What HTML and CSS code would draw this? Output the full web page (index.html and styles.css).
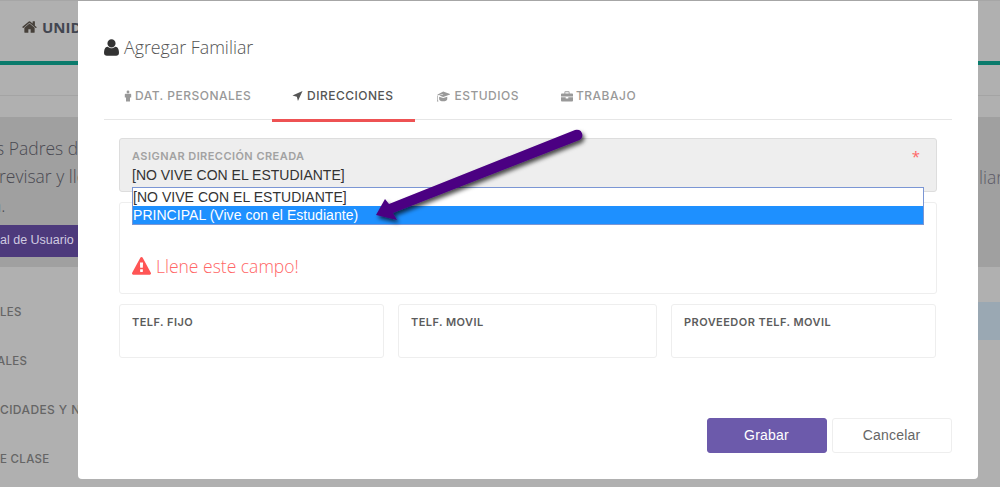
FILE: index.html
```html
<!DOCTYPE html>
<html lang="es">
<head>
<meta charset="utf-8">
<title>Agregar Familiar</title>
<link rel="stylesheet" href="styles.css">
</head>
<body>
<div class="page">
  <header class="top">
    <svg class="home" viewBox="0 0 1664 1792" aria-hidden="true"><path d="M1408 992v480q0 26-19 45t-45 19H960v-384H704v384H320q-26 0-45-19t-19-45V992q0-1 .5-3t.5-3l575-474 575 474q1 2 1 6zm223-69-62 74q-8 9-21 11h-3q-13 0-21-7L832 424 140 1001q-12 8-24 7-13-2-21-11l-62-74q-8-10-7-23.500t11-21.500L756 280q32-26 76-26t76 26l272 227V290q0-14 9-23t23-9h192q14 0 23 9t9 23v454l219 182q10 8 11 21.500t-7 23.500z"/></svg>
    <span class="brand">UNIDAD EDUCATIVA</span>
  </header>
  <div class="crumbs"></div>
  <section class="notice">
    <p class="notice-line">Estimados Padres de Familia, se les solicita</p>
    <p class="notice-line shift">revisar y llenar la información del familiar</p>
    <p class="notice-line tail">n.</p>
    <div class="manual">al de Usuario</div>
  </section>
  <ul class="menu">
    <li class="menu-row">LES</li>
    <li class="menu-row">ALES</li>
    <li class="menu-row">CIDADES Y NECESIDADES</li>
    <li class="menu-row">E CLASE</li>
  </ul>
  <div class="side-note">liar</div>
  <div class="side-band"></div>
</div>

<div class="modal">
  <h2 class="title">
    <svg class="title-icon" viewBox="0 0 1408 1792" aria-hidden="true"><path d="M1408 1405q0 120-73 189.500t-194 69.500H267q-121 0-194-69.500T0 1405q0-53 3.500-103.500t14-109T44 1084t43-97.500 62-81 85.500-53.500T346 832q9 0 42 21.500t74.500 48 108 48T704 971t133.500-21.500 108-48 74.500-48 42-21.500q61 0 111.500 20t85.500 53.500 62 81 43 97.500 26.500 108.500 14 109 3.500 103.500zM1088 512q0 159-112.500 271.500T704 896 432.500 783.500 320 512t112.500-271.500T704 128t271.500 112.500T1088 512z"/></svg>
    Agregar Familiar
  </h2>
  <nav class="tabs">
    <a class="tab t1">
      <svg class="tab-icon" viewBox="0 0 10 14" aria-hidden="true"><circle cx="5" cy="2" r="1.800"/><path d="M2 4.200h6q1 0 1 1v3.800H7.500V14h-5V9H1V5.200q0-1 1-1z"/></svg>
      DAT. PERSONALES
    </a>
    <a class="tab t2 active">
      <svg class="tab-icon" viewBox="0 0 12 12" aria-hidden="true"><path d="M11.500 .5 6.500 11.500 5.300 6.700 .5 5.500z"/></svg>
      DIRECCIONES
    </a>
    <a class="tab t3">
      <svg class="tab-icon wide" viewBox="0 0 16 12" aria-hidden="true"><path d="M8 .5 16 3.500 8 6.500 3.500 4.900 8 3.700 7.800 3.300 2.400 4.500 1.400 4.100zM3.500 6.200 8 7.800l4.500-1.600V9c0 1.200-2 2.300-4.500 2.300S3.500 10.200 3.500 9zM1.500 4.800h.7v5l.5 1.700H1l.5-1.700z"/></svg>
      ESTUDIOS
    </a>
    <a class="tab t4">
      <svg class="tab-icon wide" viewBox="0 0 14 12" aria-hidden="true"><path d="M5 0h4q1 0 1 1v1.500h3q1 0 1 1V6H0V3.500q0-1 1-1h3V1q0-1 1-1zm0 1.100v1.400h4V1.100zM0 7h5.500v1.300h3V7H14v3.800q0 1-1 1H1q-1 0-1-1z"/></svg>
      TRABAJO
    </a>
  </nav>

  <div class="field locked">
    <div class="field-head">
      <span class="label muted">ASIGNAR DIRECCIÓN CREADA</span>
      <span class="star">*</span>
    </div>
    <div class="value">[NO VIVE CON EL ESTUDIANTE]</div>
    <div class="dropdown">
      <div class="option">[NO VIVE CON EL ESTUDIANTE]</div>
      <div class="option selected">PRINCIPAL (Vive con el Estudiante)</div>
    </div>
  </div>

  <div class="field error-box">
    <div class="error">
      <svg class="error-icon" viewBox="0 0 1792 1792" aria-hidden="true"><path d="M1024 1375v-190q0-14-9.500-23.500T992 1152H800q-13 0-22.500 9.500T768 1185v190q0 14 9.500 23.500T800 1408h192q13 0 22.500-9.500t9.500-23.500zm-2-374 18-459q0-12-10-19-13-11-24-11H786q-11 0-24 11-10 7-10 21l17 457q0 10 10 16.500t24 6.500h185q14 0 23.500-6.500T1022 1001zm-14-934 768 1408q35 63-2 126-17 29-46.500 46t-63.500 17H128q-34 0-63.500-17T18 1601q-37-63-2-126L784 67q17-31 47-49t65-18 65 18 47 49z"/></svg>
      Llene este campo!
    </div>
  </div>

  <div class="phones">
    <div class="field phone p1"><span class="label">TELF. FIJO</span></div>
    <div class="field phone p2"><span class="label">TELF. MOVIL</span></div>
    <div class="field phone p3"><span class="label">PROVEEDOR TELF. MOVIL</span></div>
  </div>

  <div class="actions">
    <button class="btn primary">Grabar</button>
    <button class="btn plain">Cancelar</button>
  </div>

  <svg class="arrow" viewBox="0 0 240 110" aria-hidden="true">
    <defs><filter id="sh" x="-10%" y="-20%" width="120%" height="150%"><feDropShadow dx="2" dy="3" stdDeviation="2" flood-color="#000" flood-opacity=".7"/></filter></defs>
    <g filter="url(#sh)" fill="#4b0082">
      <path d="M204 7a5.500 5.500 0 0 1 4.500 10L22 90 26 97 5 92 14 76 18 81z"/>
    </g>
  </svg>
</div>
</body>
</html>
```
FILE: styles.css
```css
* { box-sizing: border-box; }
html, body { margin: 0; height: 100%; overflow: hidden; }
body { background: #b0b0b0; font-family: "Open Sans", sans-serif; position: relative; }

.page { height: 487px; overflow: hidden; border-top: 1px solid #a6a6a6; }
.top { height: 64px; border-bottom: 4px solid #0a7b6c; padding: 0 22px 9px; display: flex; align-items: center; gap: 5px; white-space: nowrap; }
.home { width: 15px; height: 16px; fill: #46403a; }
.brand { font: 700 15px "Open Sans", sans-serif; color: #424650; }
.crumbs { height: 31px; border-bottom: 1px solid #a4a4a4; }
.notice { margin-top: 21px; height: 150px; background: #a0a0a0; padding-top: 17px; color: #4a4a52; font-size: 17.500px; font-weight: 300; white-space: nowrap; overflow: hidden; }
.notice-line { margin: 0 0 0 -77px; height: 28px; line-height: 28px; }
.notice-line.shift { margin-left: -1px; }
.notice-line.tail { margin-left: -9px; padding-top: 1px; }
.manual { margin-top: 7px; width: 90px; height: 32px; background: #4d3a7c; color: #d0cbe0; font: 12.500px/31px "Liberation Sans", sans-serif; border-radius: 0 3px 3px 0; }
.menu { list-style: none; margin: 0; padding: 0; }
.menu-row { height: 49px; padding-top: 29px; font: 500 11.500px/14px "Inter", sans-serif; letter-spacing: .3px; color: #656565; white-space: nowrap; }
.menu-row:first-child { padding-top: 38px; height: 58px; }
.menu-row:nth-child(2) { text-indent: -3px; }
.menu-row:nth-child(3) { font-size: 12px; letter-spacing: .4px; }
.side-note { position: absolute; left: 979px; top: 165px; color: #5c5a66; font-size: 17.500px; font-weight: 300; }
.side-band { position: absolute; left: 978px; top: 302px; width: 22px; height: 38px; background: #9aa8b3; }

.modal { position: absolute; left: 78px; top: 1px; width: 900px; height: 478px; background: #fff; border-radius: 0 0 4px 4px; padding: 0 26px; }
.title { margin: 0; padding-top: 34px; height: 74px; font: 300 17.800px/24px "Open Sans", sans-serif; color: #555; display: flex; align-items: flex-start; gap: 5px; }
.title-icon { width: 15px; height: 19px; fill: #333; margin-top: 3px; }
.tabs { display: flex; height: 45px; border-bottom: 1px solid #e6e6e6; font: 500 12px/1 "Inter", sans-serif; letter-spacing: .5px; color: #999; }
.tab { display: flex; align-items: center; gap: 4px; height: 47px; padding: 0 20px 2px; border-bottom: 3px solid transparent; white-space: nowrap; }
.tab.active { color: #555; border-bottom-color: #ee5253; }
.t1 { width: 168px; gap: 3px; }
.t2 { width: 143px; }
.t3 { width: 124px; padding-left: 21px; }
.t4 { padding-left: 22px; gap: 3px; }
.tab-icon { width: 11px; height: 12px; fill: currentColor; }
.tab-icon.wide { width: 15px; height: 11px; }
.t4 .tab-icon.wide { width: 12px; }
.t1 .tab-icon { width: 8px; }

.field { border: 1px solid #eee; border-radius: 3px; padding: 11px 12px; margin-left: 15px; position: relative; }
.label { font: 600 11px/14px "Inter", sans-serif; letter-spacing: .45px; color: #5c5c5c; }
.label.muted { color: #a2a2a2; }
.locked { margin-top: 18px; height: 54px; width: 818px; background: #eee; border: 1px solid #ddd; padding-top: 10px; }
.field-head { display: flex; justify-content: space-between; padding-right: 4px; height: 14px; }
.star { color: #f66; font-size: 15px; line-height: 14px; }
.value { font: 14px/16px "Liberation Sans", sans-serif; color: #333; margin-top: 4px; }
.dropdown { position: absolute; left: 12px; top: 48px; width: 792px; height: 38px; background: #fff; border: 1px solid #7b96d4; z-index: 2; font: 14px/18px "Liberation Sans", sans-serif; color: #333; letter-spacing: .04px; }
.option { height: 18px; }
.option.selected { background: #1e90ff; color: #fff; }
.error-box { margin-top: 10px; height: 92px; width: 818px; padding-top: 51px; }
.error { display: flex; align-items: center; gap: 5px; font: 300 17.500px/24px "Open Sans", sans-serif; color: #f66; }
.error-icon { width: 19px; height: 19px; fill: #f55; }
.phones { display: flex; margin-top: 10px; margin-left: 15px; gap: 14px; }
.phone { margin: 0; height: 54px; padding-top: 4px; }
.p1 { width: 265px; }
.p2 { width: 259px; }
.p3 { width: 265px; }
.actions { display: flex; justify-content: flex-end; gap: 5px; margin-top: 60px; }
.btn { width: 120px; height: 35px; border-radius: 3px; font: 14px/1 "Liberation Sans", sans-serif; letter-spacing: .2px; padding: 0 1px 1px 0; }
.primary { background: #6c5aab; border: 1px solid #6c5aab; color: #fff; }
.plain { background: #fff; border: 1px solid #eee; color: #666; }
.arrow { position: absolute; left: 293px; top: 122px; width: 240px; height: 110px; z-index: 3; overflow: visible; }
```
